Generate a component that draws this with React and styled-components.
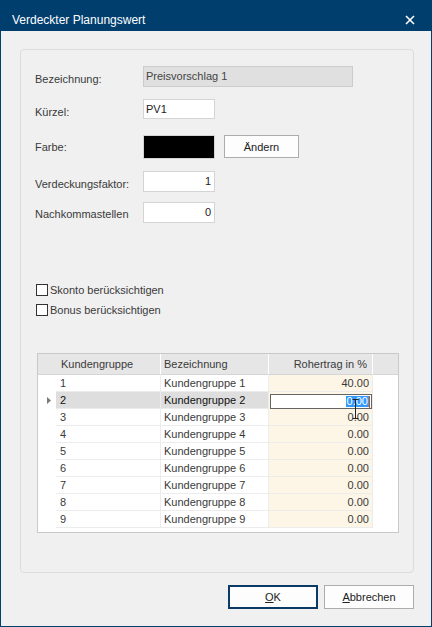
import React from "react";
import styled, { createGlobalStyle } from "styled-components";

const GlobalStyle = createGlobalStyle`
  * {
    box-sizing: border-box;
  }
  body {
    margin: 0;
    font-family: "Liberation Sans", Arial, sans-serif;
    font-size: 11px;
    color: #333;
  }
`;

const Window = styled.div`
  width: 432px;
  height: 627px;
  border: 1px solid #003e6e;
  background: #f0f0f0;
  display: flex;
  flex-direction: column;
`;

const TitleBar = styled.div`
  height: 30px;
  flex-shrink: 0;
  background: #003e6e;
  color: #fff;
  display: flex;
  justify-content: space-between;
`;

const Title = styled.div`
  font-size: 12px;
  line-height: 14px;
  padding: 12px 0 0 11px;
`;

const CloseBox = styled.div`
  width: 42px;
  display: flex;
  justify-content: center;
  padding-top: 14px;
`;

const Body = styled.div`
  flex: 1;
  padding: 18px 17px 0 19px;
  display: flex;
  flex-direction: column;
`;

const GroupBox = styled.div`
  width: 394px;
  height: 524px;
  border: 1px solid #dcdcdc;
  border-radius: 4px;
  padding: 0 15px 0 14px;
  display: flex;
  flex-direction: column;
`;

const FormRow = styled.div`
  display: flex;
  align-items: center;
  height: ${(p) => p.$height}px;
  margin-top: ${(p) => p.$top}px;
`;

const Label = styled.div`
  width: 108px;
  flex-shrink: 0;
  line-height: 13px;
  color: #3a3a3a;
  margin-top: ${(p) => p.$shift * 2}px;
`;

const TextBox = styled.div`
  width: ${(p) => p.$width}px;
  height: 100%;
  border: 1px solid ${(p) => (p.$disabled ? "#cccccc" : "#d4d4d4")};
  background: ${(p) => (p.$disabled ? "#e0e0e0" : "#fff")};
  color: ${(p) => (p.$disabled ? "#444" : "#222")};
  display: flex;
  align-items: center;
  justify-content: ${(p) => (p.$right ? "flex-end" : "flex-start")};
  padding: 0 3px 0 2px;
  line-height: 13px;
`;

const Swatch = styled.div`
  width: 72px;
  height: 24px;
  background: #000;
  border: 1px solid #d4d4d4;
`;

const SmallButton = styled.div`
  width: 75px;
  height: 23px;
  margin-left: 9px;
  align-self: flex-start;
  border: 1px solid #adadad;
  background: #fdfdfd;
  color: #222;
  display: flex;
  align-items: center;
  justify-content: center;
`;

const CheckRow = styled.label`
  display: flex;
  align-items: center;
  height: 14px;
  margin-top: ${(p) => p.$top}px;
  margin-left: 1px;
  color: #3a3a3a;
`;

const CheckBox = styled.span`
  width: 12px;
  height: 12px;
  border: 1px solid #333;
  background: #fff;
  margin-right: 2px;
`;

const Grid = styled.div`
  position: relative;
  margin: 36px 0 0 2px;
  width: 362px;
  height: 180px;
  border: 1px solid #c9c9c9;
  background: #fff;
`;

const GridRow = styled.div`
  display: grid;
  grid-template-columns: 18px 105px 108px 104px 1fr;
  height: ${(p) => (p.$header ? 21 : 17)}px;
`;

const HeadCell = styled.div`
  background: #e6e6e6;
  border-bottom: 1px solid #d5d5d5;
  border-right: ${(p) => (p.$sep ? "1px solid #fff" : "none")};
  display: flex;
  align-items: center;
  justify-content: ${(p) => (p.$right ? "flex-end" : "flex-start")};
  padding: 0 ${(p) => (p.$right ? 5 : 0)}px 0 ${(p) => p.$pad || 0}px;
  color: #3a3a3a;
`;

const RowHead = styled.div`
  display: flex;
  align-items: center;
  justify-content: center;
  padding-left: 4px;
`;

const Cell = styled.div`
  display: flex;
  align-items: center;
  justify-content: ${(p) => (p.$right ? "flex-end" : "flex-start")};
  padding: 0 3px 0 ${(p) => p.$pad}px;
  border-bottom: 1px solid #ececec;
  border-right: 1px solid #ececec;
  background: ${(p) => (p.$selected ? "#dedede" : p.$tint ? "#fdf5e6" : "#fff")};
  color: ${(p) => (p.$selected ? "#111" : "#3a3a3a")};
`;

const EditCell = styled.div`
  position: relative;
  border-right: 1px solid #ececec;
  background: #fdf5e6;
`;

const EditBox = styled.div`
  position: absolute;
  left: 1px;
  top: 2px;
  right: 0;
  height: 15px;
  border: 1px solid #646464;
  background: #fff;
  display: flex;
  align-items: center;
  justify-content: flex-end;
  padding-right: 1px;
`;

const Selected = styled.span`
  background: #3399ff;
  color: #fff;
  line-height: 11px;
  padding: 0 1px;
`;

const Caret = styled.span`
  width: 1px;
  height: 12px;
  background: #c45a00;
`;

const IBeam = styled.svg`
  position: absolute;
  left: 314px;
  top: 45px;
`;

const Footer = styled.div`
  display: flex;
  justify-content: flex-end;
  gap: 6px;
  margin-top: 12px;
  width: 394px;
`;

const DialogButton = styled.div`
  width: 90px;
  height: 24px;
  border: ${(p) => (p.$default ? "2px solid #0b3a66" : "1px solid #adadad")};
  background: #fdfdfd;
  color: #222;
  display: flex;
  align-items: center;
  justify-content: center;
`;

const groups = [
  { id: 1, value: "40.00" },
  { id: 2, value: "0.00", editing: true },
  { id: 3, value: "0.00" },
  { id: 4, value: "0.00" },
  { id: 5, value: "0.00" },
  { id: 6, value: "0.00" },
  { id: 7, value: "0.00" },
  { id: 8, value: "0.00" },
  { id: 9, value: "0.00" },
];

const App = () => {
  return (
    <>
      <GlobalStyle />
      <Window>
        <TitleBar>
          <Title>Verdeckter Planungswert</Title>
          <CloseBox>
            <svg width="10" height="10" viewBox="0 0 10 10">
              <path d="M1 1 L9 9 M9 1 L1 9" stroke="#fff" strokeWidth="1.6" />
            </svg>
          </CloseBox>
        </TitleBar>
        <Body>
          <GroupBox>
            <FormRow $height={21} $top={16}>
              <Label $shift={3}>Bezeichnung:</Label>
              <TextBox $width={210} $disabled>
                Preisvorschlag 1
              </TextBox>
            </FormRow>
            <FormRow $height={20} $top={12}>
              <Label $shift={3.5}>Kürzel:</Label>
              <TextBox $width={72}>PV1</TextBox>
            </FormRow>
            <FormRow $height={24} $top={16}>
              <Label $shift={0.5}>Farbe:</Label>
              <Swatch />
              <SmallButton>Ändern</SmallButton>
            </FormRow>
            <FormRow $height={21} $top={12}>
              <Label $shift={2.5}>Verdeckungsfaktor:</Label>
              <TextBox $width={72} $right>
                1
              </TextBox>
            </FormRow>
            <FormRow $height={21} $top={10}>
              <Label $shift={1.5}>Nachkommastellen</Label>
              <TextBox $width={72} $right>
                0
              </TextBox>
            </FormRow>

            <CheckRow $top={60}>
              <CheckBox />
              Skonto berücksichtigen
            </CheckRow>
            <CheckRow $top={6}>
              <CheckBox />
              Bonus berücksichtigen
            </CheckRow>

            <Grid>
              <GridRow $header>
                <HeadCell />
                <HeadCell $sep $pad={5}>
                  Kundengruppe
                </HeadCell>
                <HeadCell $sep $pad={3}>
                  Bezeichnung
                </HeadCell>
                <HeadCell $sep $right>
                  Rohertrag in %
                </HeadCell>
                <HeadCell />
              </GridRow>
              {groups.map((g) => (
                <GridRow key={g.id}>
                  <RowHead>
                    {g.editing && (
                      <svg width="4" height="7" viewBox="0 0 4 7">
                        <path d="M0 0 L4 3.5 L0 7 Z" fill="#7a7a7a" />
                      </svg>
                    )}
                  </RowHead>
                  <Cell $pad={4} $selected={g.editing}>
                    {g.id}
                  </Cell>
                  <Cell $pad={3} $selected={g.editing}>
                    Kundengruppe {g.id}
                  </Cell>
                  {g.editing ? (
                    <EditCell>
                      <EditBox>
                        <Selected>{g.value}</Selected>
                        <Caret />
                      </EditBox>
                    </EditCell>
                  ) : (
                    <Cell $pad={3} $right $tint>
                      {g.value}
                    </Cell>
                  )}
                  <div />
                </GridRow>
              ))}
              <IBeam width="7" height="20" viewBox="0 0 7 20">
                <path
                  d="M0.5 0.5 H6.5 M3.5 0.5 V19.5 M0.5 19.5 H6.5"
                  stroke="#222"
                  strokeWidth="1"
                  fill="none"
                />
              </IBeam>
            </Grid>
          </GroupBox>
          <Footer>
            <DialogButton $default>
              <span>
                <u>O</u>K
              </span>
            </DialogButton>
            <DialogButton>
              <span>
                <u>A</u>bbrechen
              </span>
            </DialogButton>
          </Footer>
        </Body>
      </Window>
    </>
  );
};

export default App;
